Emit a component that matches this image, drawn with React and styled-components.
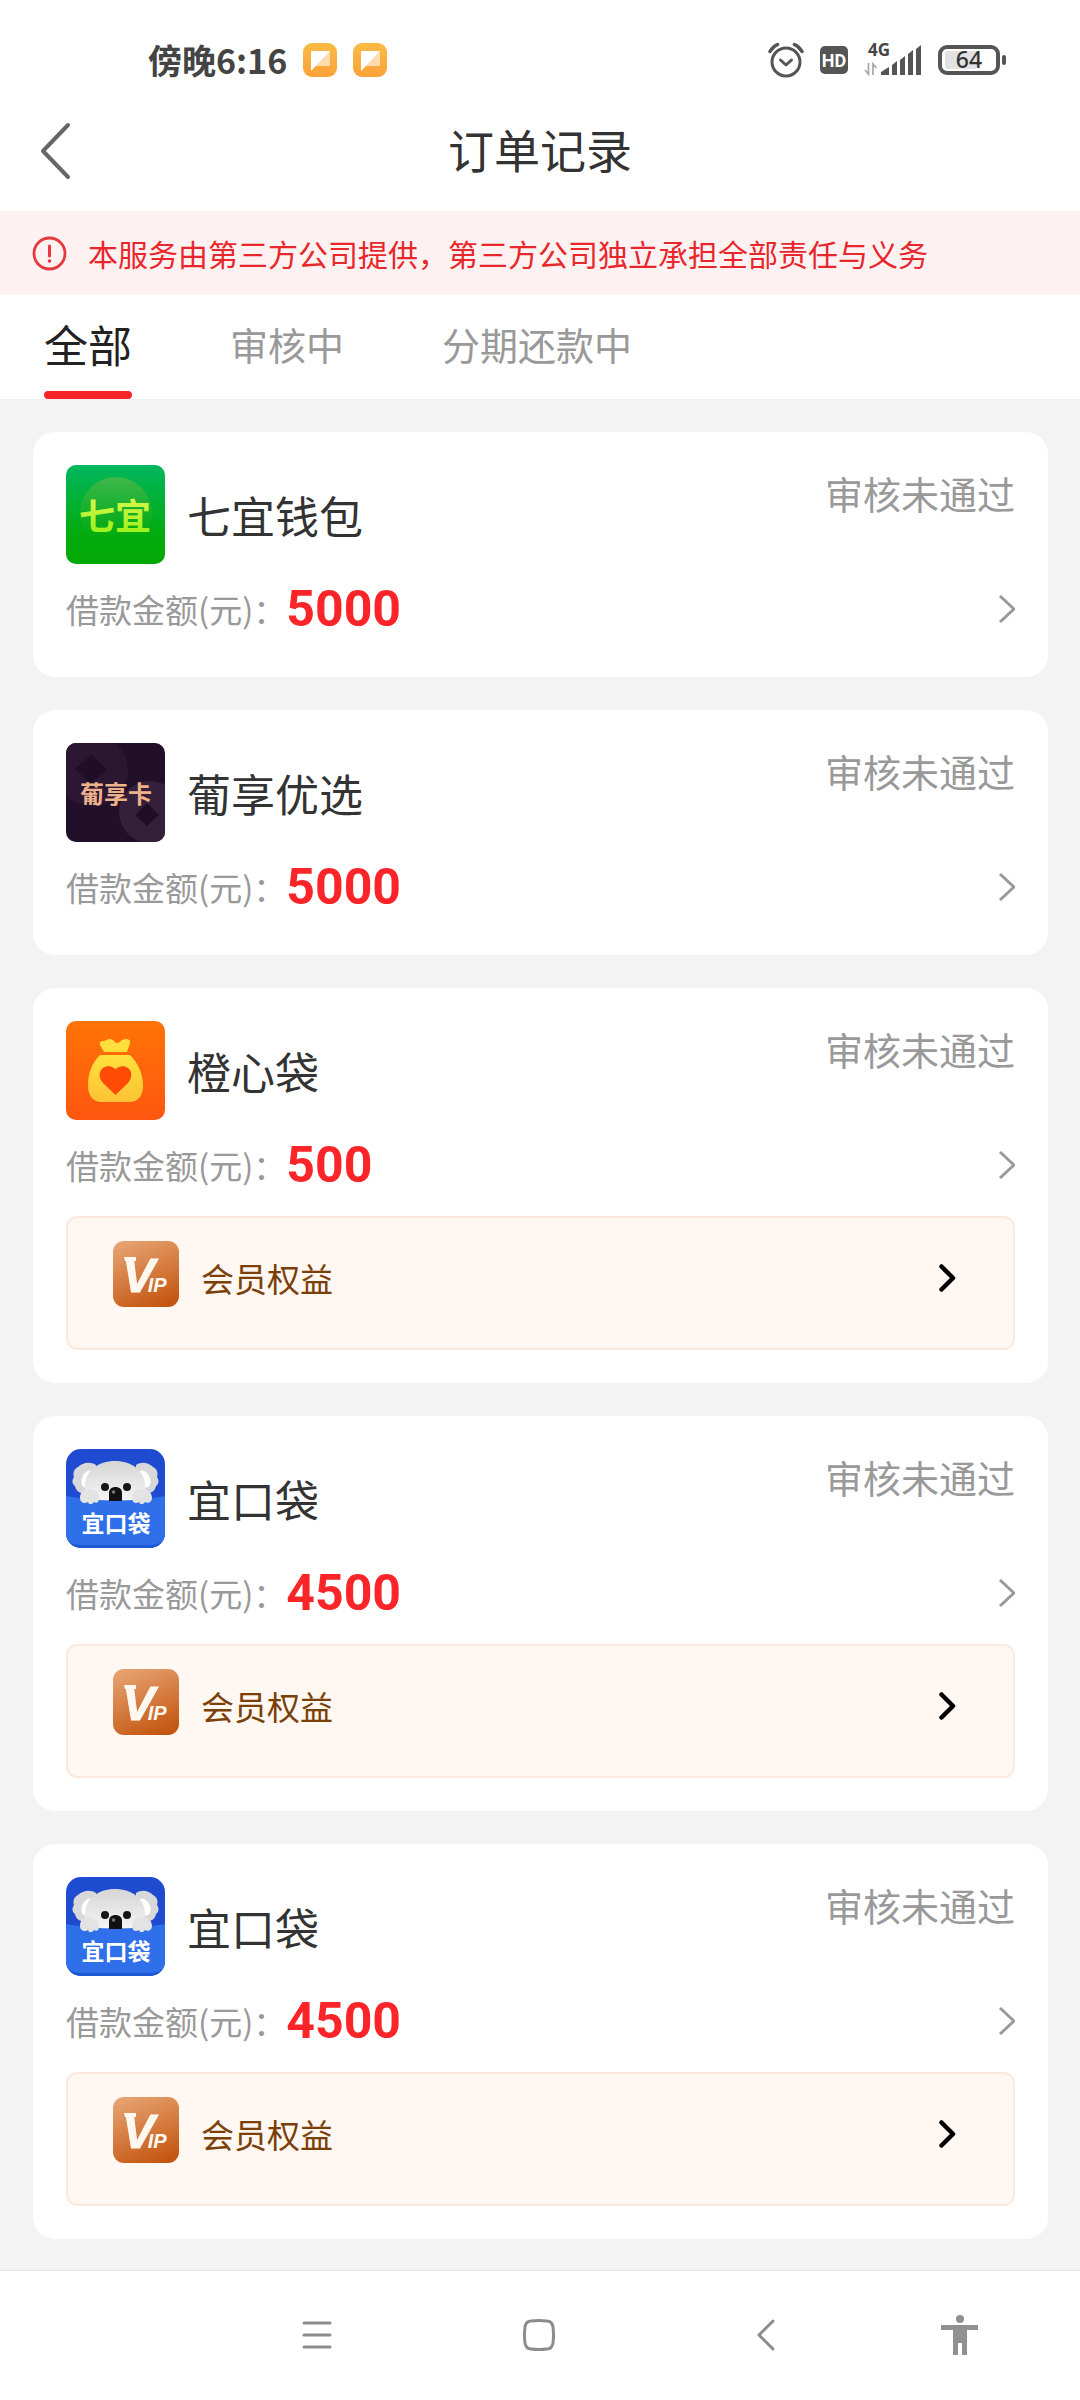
import React, { useState } from "react";
import styled, { createGlobalStyle } from "styled-components";

const GlobalStyle = createGlobalStyle`
    * {
        box-sizing: border-box;
    }

    body {
        margin: 0;
        background: #f3f3f3;
        color: #333;
        font-family: "Noto Sans CJK SC", "Noto Sans", sans-serif;
    }

    button {
        border: 0;
        padding: 0;
        background: none;
        color: inherit;
        font: inherit;
        cursor: pointer;
    }

    svg {
        display: block;
        flex: none;
    }
`;

const Page = styled.div`
    display: flex;
    flex-direction: column;
    min-height: 100vh;
`;

/* ---------- status bar ---------- */
const StatusBar = styled.div`
    display: flex;
    align-items: center;
    justify-content: space-between;
    height: 90px;
    padding: 30px 74px 0 148px;
    background: #fff;
`;

const StatusGroup = styled.div`
    display: flex;
    align-items: center;
    gap: 16px;
`;

const Time = styled.span`
    font-size: 34px;
    line-height: 40px;
    font-weight: 700;
    color: #444;
`;

/* ---------- header ---------- */
const TitleBar = styled.header`
    display: grid;
    grid-template-columns: 72px 1fr 72px;
    align-items: center;
    height: 121px;
    padding: 0 32px;
    background: #fff;
`;

const BackButton = styled.button`
    display: flex;
    align-items: center;
    height: 72px;
`;

const Title = styled.h1`
    margin: 0;
    padding-bottom: 5px;
    font-size: 46px;
    line-height: 66px;
    font-weight: 400;
    text-align: center;
`;

const Notice = styled.div`
    display: flex;
    align-items: center;
    gap: 21px;
    height: 84px;
    padding: 0 32px;
    background: #fef1f2;
    color: #e8262b;
    font-size: 30px;
    line-height: 44px;
`;

const TabBar = styled.div`
    display: flex;
    gap: 98px;
    height: 105px;
    padding: 0 44px;
    background: #fff;
    border-bottom: 1px solid #f0f0f0;
`;

const Tab = styled.button`
    display: flex;
    flex-direction: column;
    justify-content: space-between;
    padding-top: 18px;
    font-size: ${(p) => (p.$active ? "44px" : "38px")};
    line-height: 62px;
    color: ${(p) => (p.$active ? "#222" : "#999")};

    &:after {
        content: "";
        width: 100%;
        height: 8px;
        border-radius: 4px;
        background: ${(p) => (p.$active ? "#f72626" : "transparent")};
    }
`;

/* ---------- orders ---------- */
const OrderList = styled.main`
    flex: 1;
    display: flex;
    flex-direction: column;
    gap: 33px;
    padding: 32px 32px 31px 33px;
`;

const Card = styled.article`
    padding: 33px;
    border-radius: 22px;
    background: #fff;
`;

const CardHead = styled.div`
    display: flex;
    align-items: center;
    gap: 22px;
`;

const Name = styled.h2`
    flex: 1;
    margin: 0;
    font-size: 44px;
    line-height: 64px;
    font-weight: 400;
`;

const OrderStatus = styled.span`
    align-self: flex-start;
    font-size: 38px;
    line-height: 55px;
    color: #999;
`;

const AmountRow = styled.button`
    display: flex;
    align-items: center;
    justify-content: space-between;
    width: 100%;
    height: 70px;
    margin-top: 10px;
`;

const AmountText = styled.span`
    display: flex;
    align-items: center;
    font-size: 33px;
    line-height: 60px;
    color: #999;
`;

const Amount = styled.strong`
    font-family: Roboto, sans-serif;
    font-size: 50px;
    font-weight: 700;
    color: #fa2528;
`;

const Benefit = styled.button`
    display: flex;
    align-items: center;
    width: 100%;
    margin-top: 16px;
    padding: 23px 57px 33px 45px;
    border: 2px solid #fbe9df;
    border-radius: 11px;
    background: #fff7f1;
    text-align: left;

    svg:first-child {
        align-self: flex-start;
    }
`;

const BenefitText = styled.span`
    flex: 1;
    padding-left: 22px;
    font-size: 33px;
    line-height: 74px;
    color: #7b3f08;
`;

/* ---------- bottom navigation ---------- */
const NavBar = styled.nav`
    display: grid;
    grid-template-columns: 222fr 222fr 232fr 156fr;
    height: 130px;
    padding: 0 42px 2px 206px;
    border-top: 1px solid #e4e4e4;
    background: #fff;
`;

const NavButton = styled.button`
    display: flex;
    align-items: center;
    justify-content: center;
`;

const cjk = '"Noto Sans CJK SC", sans-serif';

const NoteIcon = () => (
    <svg width='34' height='34' viewBox='0 0 34 34' aria-hidden='true'>
        <defs>
            <linearGradient id='note' x1='0' y1='0' x2='0' y2='1'>
                <stop offset='0' stopColor='#f9bb45' />
                <stop offset='1' stopColor='#fca23a' />
            </linearGradient>
        </defs>
        <rect width='34' height='34' rx='9' fill='url(#note)' />
        <rect x='8' y='8' width='19' height='15' rx='1' fill='#fddcae' />
        <path d='M8 9q0-1 1-1h18L8 28z' fill='#fff' />
    </svg>
);

const AlarmIcon = () => (
    <svg width='36' height='36' viewBox='0 0 36 36' fill='none' stroke='#555' aria-hidden='true'>
        <circle cx='18' cy='20' r='14' strokeWidth='3' />
        <path d='M12.500 18l5.500 5 5.500-5' strokeWidth='3' strokeLinecap='round' strokeLinejoin='round' />
        <path d='M2 9.500C4 6 6 4 9.500 2.500M34 9.500C32 6 30 4 26.500 2.500' strokeWidth='3.500' strokeLinecap='round' />
    </svg>
);

const HdIcon = () => (
    <svg width='28' height='28' viewBox='0 0 28 28' aria-label='HD'>
        <rect width='28' height='28' rx='5' fill='#555' />
        <text x='14' y='21' textAnchor='middle' fontFamily='Roboto, sans-serif' fontSize='18' fontWeight='700' fill='#fff'>
            HD
        </text>
    </svg>
);

const SignalIcon = () => (
    <svg width='58' height='50' viewBox='0 -8 58 50' aria-label='4G'>
        <text x='4' y='13' fontFamily='"Noto Sans", sans-serif' fontSize='17' fontWeight='700' fill='#444'>
            4G
        </text>
        <path d='M4.500 20v11L1 27M9 32V21l3.500 4' fill='none' stroke='#aaa' strokeWidth='1.800' />
        <path
            d='M17 32v-3l8-5v8zM28 32V22l5-4v14zM36 32V17l5-4v19zM44 32V11l5-4v25zM52 32V6l5-4v30z'
            fill='#555'
        />
    </svg>
);

const BatteryIcon = () => (
    <svg width='68' height='44' viewBox='0 -6 68 44' aria-label='64%'>
        <rect x='7' y='7' width='32' height='18' rx='3' fill='#e2e2e2' />
        <rect x='2' y='3' width='58' height='26' rx='7' fill='none' stroke='#555' strokeWidth='4' />
        <rect x='64' y='11' width='4' height='10' rx='2' fill='#555' />
        <text x='31' y='24' textAnchor='middle' fontFamily='"Noto Sans", sans-serif' fontSize='23' fontWeight='500' fill='#333'>
            64
        </text>
    </svg>
);

const WarnIcon = () => (
    <svg width='35' height='35' viewBox='0 0 35 35' fill='none' stroke='#e5393e' aria-hidden='true'>
        <circle cx='17.500' cy='17.500' r='15.500' strokeWidth='2.800' />
        <path d='M17.500 10v10' strokeWidth='3' strokeLinecap='round' />
        <circle cx='17.500' cy='25' r='1.800' fill='#e5393e' stroke='none' />
    </svg>
);

const Chevron = () => (
    <svg width='17' height='30' viewBox='0 0 17 30' fill='none' aria-hidden='true'>
        <path d='M2 2l14 13L2 28' stroke='#999' strokeWidth='3' strokeLinejoin='round' />
    </svg>
);

const BoldChevron = () => (
    <svg width='17' height='28' viewBox='0 0 17 28' fill='none' aria-hidden='true'>
        <path d='M2.500 2.500L14 14 2.500 25.500' stroke='#000' strokeWidth='4.500' strokeLinecap='round' strokeLinejoin='round' />
    </svg>
);

const WalletLogo = () => (
    <svg width='99' height='99' viewBox='0 0 99 99' aria-hidden='true'>
        <defs>
            <linearGradient id='walletBg' x1='0' y1='0' x2='0' y2='1'>
                <stop offset='0' stopColor='#02b75e' />
                <stop offset='.7' stopColor='#02ab0e' />
                <stop offset='1' stopColor='#03a904' />
            </linearGradient>
            <linearGradient id='walletDisc' x1='0' y1='0' x2='0' y2='1'>
                <stop offset='0' stopColor='#42b84b' />
                <stop offset='1' stopColor='#0aa808' stopOpacity='0' />
            </linearGradient>
            <linearGradient id='walletText' x1='0' y1='0' x2='0' y2='1'>
                <stop offset='0' stopColor='#ecf95c' />
                <stop offset='1' stopColor='#8df00d' />
            </linearGradient>
        </defs>
        <rect width='99' height='99' rx='10' fill='url(#walletBg)' />
        <circle cx='50' cy='48' r='36' fill='url(#walletDisc)' />
        <text x='49' y='65' textAnchor='middle' fontFamily={cjk} fontSize='36' fontWeight='700' fill='url(#walletText)'>
            七宜
        </text>
    </svg>
);

const GrapeLogo = () => (
    <svg width='99' height='99' viewBox='0 0 99 99' aria-hidden='true'>
        <defs>
            <clipPath id='grapeClip'>
                <rect width='99' height='99' rx='10' />
            </clipPath>
        </defs>
        <g clipPath='url(#grapeClip)'>
            <rect width='99' height='99' fill='#220f29' />
            <circle cx='26' cy='27' r='36' fill='#2b1731' />
            <circle cx='84' cy='69' r='31' fill='#34203a' />
            <path d='M25 12l16 14-16 14L9 26z' fill='#200d27' />
            <path d='M81 60l12 12-12 11-12-11z' fill='#200d27' />
        </g>
        <text x='50' y='60' textAnchor='middle' fontFamily={cjk} fontSize='24' fontWeight='700' fill='#eeb28b'>
            葡享卡
        </text>
    </svg>
);

const BagLogo = () => (
    <svg width='99' height='99' viewBox='0 0 99 99' aria-hidden='true'>
        <defs>
            <linearGradient id='bagBg' x1='0' y1='0' x2='0' y2='1'>
                <stop offset='0' stopColor='#ff7406' />
                <stop offset='1' stopColor='#ff5610' />
            </linearGradient>
            <linearGradient id='bag' x1='0' y1='0' x2='0' y2='1'>
                <stop offset='0' stopColor='#ffe13c' />
                <stop offset='1' stopColor='#fdc235' />
            </linearGradient>
        </defs>
        <rect width='99' height='99' rx='10' fill='url(#bagBg)' />
        <path
            d='M38 31l-4-7c-1-3 1-4 3-4 3 0 4-2 7-2 4 0 4 4 7 4s4-4 9-4c5 0 5 4 3 7l-2 6z'
            fill='#ffdf3b'
        />
        <path
            d='M34 34h30c8 8 13 19 13 30 0 11-5 17-14 17H36c-9 0-14-6-14-17 0-12 4-22 12-30z'
            fill='url(#bag)'
        />
        <path
            d='M49.500 74L37 62c-5-6-4-12 0-15 4-3 9-2 12.500 1 3.500-3 8.500-4 12.500-1 4 3 5 9 0 15z'
            fill='#ff4b05'
        />
    </svg>
);

const KoalaLogo = () => (
    <svg width='99' height='99' viewBox='0 0 99 99' aria-hidden='true'>
        <defs>
            <clipPath id='koalaClip'>
                <rect width='99' height='99' rx='15' />
            </clipPath>
            <linearGradient id='koalaFur' x1='0' y1='0' x2='0' y2='1'>
                <stop offset='0' stopColor='#d6d6d6' />
                <stop offset='1' stopColor='#f6f6f6' />
            </linearGradient>
        </defs>
        <g clipPath='url(#koalaClip)'>
            <rect width='99' height='99' fill='#1e4bcf' />
            <path
                d='M30 16c-6-4-14-2-18 2-5 2-5 8-4 10-3 4-1 8 1 9 1 5 4 6 6 7l7 6h8zM70 16c6-4 13-2 17 2 5 2 5 8 4 10 3 4 1 8-1 9-1 5-4 6-6 7l-7 6h-8z'
                fill='#d8d8da'
            />
            <ellipse cx='22' cy='30' rx='6' ry='9' transform='rotate(25 22 30)' fill='#fff' />
            <ellipse cx='78' cy='30' rx='6' ry='9' transform='rotate(-25 78 30)' fill='#fff' />
            <path d='M49 12c17 0 30 10 30 25 0 10-6 17-14 17H33c-9 0-14-7-14-17 0-15 13-25 30-25z' fill='url(#koalaFur)' />
            <path d='M0 47q50 9 99 0v52H0z' fill='#2f70ea' />
            <path d='M0 85q0 11 16 11h67q16 0 16-11v14H0z' fill='#1c58d2' />
            <path d='M14 49c0-6 4-9 9-9s10 3 10 9c0 4-2 6-5 4-2 3-5 3-6 0-3 2-8 1-8-4z' fill='#e3e3e5' />
            <path d='M66 49c0-6 5-9 10-9s10 3 10 9c0 4-4 6-7 4-2 3-5 3-6 0-3 2-7 1-7-4z' fill='#e3e3e5' />
            <circle cx='39' cy='38' r='4' fill='#161616' />
            <circle cx='61' cy='38' r='4' fill='#161616' />
            <path d='M43 52V44c0-4 3-6 6.500-6s6.500 2 6.500 6v8z' fill='#111' />
            <circle cx='47.500' cy='43' r='1.800' fill='#777' />
        </g>
        <text x='50' y='83' textAnchor='middle' fontFamily={cjk} fontSize='23' fontWeight='700' fill='#fff'>
            宜口袋
        </text>
    </svg>
);

const VipIcon = () => (
    <svg width='66' height='66' viewBox='0 0 66 66' aria-hidden='true'>
        <defs>
            <linearGradient id='vip' x1='.3' y1='0' x2='.7' y2='1'>
                <stop offset='0' stopColor='#e5a06e' />
                <stop offset='1' stopColor='#c45611' />
            </linearGradient>
        </defs>
        <rect width='66' height='66' rx='11' fill='url(#vip)' />
        {/* serif of the V */}
        <path d='M11 16h12v4H12z' fill='#fff8f0' />
        <text
            x='9'
            y='51'
            fontFamily='"Liberation Sans", sans-serif'
            fontStyle='italic'
            fontWeight='700'
            fontSize='49'
            fill='#fff8f0'
            stroke='#fff8f0'
        >
            V<tspan dx='-7' fontSize='20' strokeWidth='0'>IP</tspan>
        </text>
    </svg>
);

const orders = [
    { id: 1, name: "七宜钱包", amount: 5000, Logo: WalletLogo },
    { id: 2, name: "葡享优选", amount: 5000, Logo: GrapeLogo },
    { id: 3, name: "橙心袋", amount: 500, Logo: BagLogo, vip: true },
    { id: 4, name: "宜口袋", amount: 4500, Logo: KoalaLogo, vip: true },
    { id: 5, name: "宜口袋", amount: 4500, Logo: KoalaLogo, vip: true },
];

const tabs = ["全部", "审核中", "分期还款中"];

function OrderCard({ name, amount, Logo, vip }) {
    return (
        <Card>
            <CardHead>
                <Logo />
                <Name>{name}</Name>
                <OrderStatus>审核未通过</OrderStatus>
            </CardHead>
            <AmountRow type='button'>
                <AmountText>
                    借款金额(元)：
                    <Amount>{amount}</Amount>
                </AmountText>
                <Chevron />
            </AmountRow>
            {vip && (
                <Benefit type='button'>
                    <VipIcon />
                    <BenefitText>会员权益</BenefitText>
                    <BoldChevron />
                </Benefit>
            )}
        </Card>
    );
}

function App() {
    const [active, setActive] = useState(0);

    return (
        <Page>
            <GlobalStyle />
            <StatusBar>
                <StatusGroup>
                    <Time>傍晚6:16</Time>
                    <NoteIcon />
                    <NoteIcon />
                </StatusGroup>
                <StatusGroup>
                    <AlarmIcon />
                    <HdIcon />
                    <SignalIcon />
                    <BatteryIcon />
                </StatusGroup>
            </StatusBar>
            <TitleBar>
                <BackButton type='button' aria-label='返回'>
                    <svg width='46' height='60' viewBox='0 0 46 60' fill='none'>
                        <path d='M36 4L11 30l25 26' stroke='#666' strokeWidth='4' strokeLinecap='round' strokeLinejoin='round' />
                    </svg>
                </BackButton>
                <Title>订单记录</Title>
            </TitleBar>
            <Notice role='note'>
                <WarnIcon />
                <span>本服务由第三方公司提供，第三方公司独立承担全部责任与义务</span>
            </Notice>
            <TabBar role='tablist'>
                {tabs.map((tab, i) => (
                    <Tab
                        key={tab}
                        type='button'
                        role='tab'
                        aria-selected={active === i}
                        $active={active === i}
                        onClick={() => setActive(i)}
                    >
                        {tab}
                    </Tab>
                ))}
            </TabBar>
            <OrderList>
                {orders.map(({ id, ...order }) => (
                    <OrderCard key={id} {...order} />
                ))}
            </OrderList>
            <NavBar>
                <NavButton type='button' aria-label='菜单'>
                    <svg width='30' height='32' viewBox='0 0 30 32' stroke='#8c8c8c' strokeWidth='3' strokeLinecap='round'>
                        <path d='M2 4h26M2 16h26M2 28h26' />
                    </svg>
                </NavButton>
                <NavButton type='button' aria-label='主页'>
                    <svg width='32' height='32' viewBox='0 0 32 32' fill='none' stroke='#8c8c8c' strokeWidth='3'>
                        <path d='M8 2q8-1 16 0 5 0 6 6 1 8 0 16-1 6-6 6-8 1-16 0-5 0-6-6-1-8 0-16 1-6 6-6z' />
                    </svg>
                </NavButton>
                <NavButton type='button' aria-label='后退'>
                    <svg width='18' height='32' viewBox='0 0 18 32' fill='none' stroke='#8c8c8c' strokeWidth='3' strokeLinecap='round' strokeLinejoin='round'>
                        <path d='M16 2L2 16l14 14' />
                    </svg>
                </NavButton>
                <NavButton type='button' aria-label='无障碍'>
                    <svg width='38' height='46' viewBox='0 0 38 46' fill='#919191'>
                        <circle cx='19' cy='7' r='4' />
                        <path d='M0 13h37v5H26v25h-5V31h-4v12h-5V18H0z' />
                    </svg>
                </NavButton>
            </NavBar>
        </Page>
    );
}

export default App;
